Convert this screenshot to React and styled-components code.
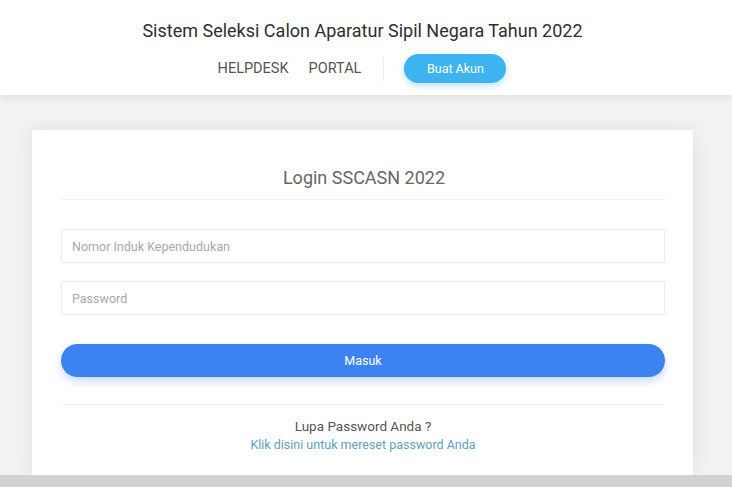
import React from "react";
import styled, { createGlobalStyle } from "styled-components";

const Global = createGlobalStyle`
  html, body { margin: 0; padding: 0; background: #f2f2f3; }
  body { font-family: Roboto, "Noto Sans", Arial, sans-serif; }
  * { box-sizing: border-box; }
`;

const Page = styled.div`
  width: 732px;
  height: 487px;
  overflow: hidden;
  display: flex;
  flex-direction: column;
  background: #f2f2f3;
`;

const Header = styled.header`
  height: 95px;
  background: #fff;
  display: flex;
  flex-direction: column;
  align-items: center;
  padding-top: 20px;
  box-shadow: 0 3px 10px rgba(0, 0, 0, 0.08);
  position: relative;
  z-index: 1;
`;

const SiteTitle = styled.h1`
  margin: 0;
  font-size: 18px;
  font-weight: 400;
  color: #2e2e2e;
  padding-right: 7px;
`;

const Nav = styled.nav`
  display: flex;
  align-items: center;
  margin-top: 13px;
  padding-right: 8px;
`;

const NavLink = styled.a`
  font-size: 14.5px;
  color: #555;
  text-decoration: none;
  margin-right: ${(p) => p.$gap}px;
`;

const NavDivider = styled.span`
  width: 1px;
  height: 24px;
  background: #ececec;
  margin: 0 20px 0 2px;
`;

const CreateButton = styled.button`
  width: 102px;
  height: 29px;
  border: none;
  border-radius: 15px;
  background: #3db4ef;
  color: #fff;
  font-family: inherit;
  font-size: 12.5px;
  box-shadow: 0 3px 6px rgba(61, 180, 239, 0.35);
`;

const Main = styled.main`
  flex: 1;
  padding: 35px 39px 0 32px;
  display: flex;
`;

const Card = styled.section`
  width: 661px;
  height: 345px;
  background: #fff;
  box-shadow: 0 0 18px rgba(0, 0, 0, 0.08);
  display: flex;
  flex-direction: column;
  padding: 38px 28px 0 29px;
`;

const CardTitle = styled.h2`
  margin: 0;
  text-align: center;
  font-size: 18px;
  font-weight: 400;
  color: #666;
  line-height: 20px;
  padding-left: 2px;
`;

const Rule = styled.hr`
  border: none;
  height: 1px;
  background: #f0f0f0;
  margin: ${(p) => p.$m};
`;

const Input = styled.input`
  width: 100%;
  height: 34px;
  border: 1px solid #ececec;
  border-radius: 2px;
  padding: 0 10px;
  font-family: inherit;
  font-size: 12.5px;
  color: #333;
  margin-bottom: ${(p) => p.$mb}px;
  outline: none;
  &::placeholder { color: #a8a8a8; }
`;

const SubmitButton = styled.button`
  width: 100%;
  height: 33px;
  border: none;
  border-radius: 17px;
  background: #3c82f0;
  color: #fff;
  font-family: inherit;
  font-size: 12.5px;
  box-shadow: 0 4px 8px rgba(60, 130, 240, 0.3);
`;

const Forgot = styled.div`
  text-align: center;
  line-height: 18px;
  margin-top: 2px;
`;

const ForgotText = styled.div`
  color: #555;
  font-size: 13.5px;
`;

const ForgotLink = styled.a`
  color: #5fa0bf;
  text-decoration: none;
  font-size: 12.5px;
`;

const Footer = styled.footer`
  height: 12px;
  background: #d2d2d2;
`;

export default function App() {
  return (
    <Page>
      <Global />
      <Header>
        <SiteTitle>Sistem Seleksi Calon Aparatur Sipil Negara Tahun 2022</SiteTitle>
        <Nav>
          <NavLink href="#" $gap={20}>HELPDESK</NavLink>
          <NavLink href="#" $gap={20}>PORTAL</NavLink>
          <NavDivider />
          <CreateButton>Buat Akun</CreateButton>
        </Nav>
      </Header>
      <Main>
        <Card>
          <CardTitle>Login SSCASN 2022</CardTitle>
          <Rule $m="11px 0 29px" />
          <Input placeholder="Nomor Induk Kependudukan" $mb={18} />
          <Input type="password" placeholder="Password" $mb={29} />
          <SubmitButton>Masuk</SubmitButton>
          <Rule $m="27px 0 10px" />
          <Forgot>
            <ForgotText>Lupa Password Anda ?</ForgotText>
            <ForgotLink href="#">Klik disini untuk mereset password Anda</ForgotLink>
          </Forgot>
        </Card>
      </Main>
      <Footer />
    </Page>
  );
}
